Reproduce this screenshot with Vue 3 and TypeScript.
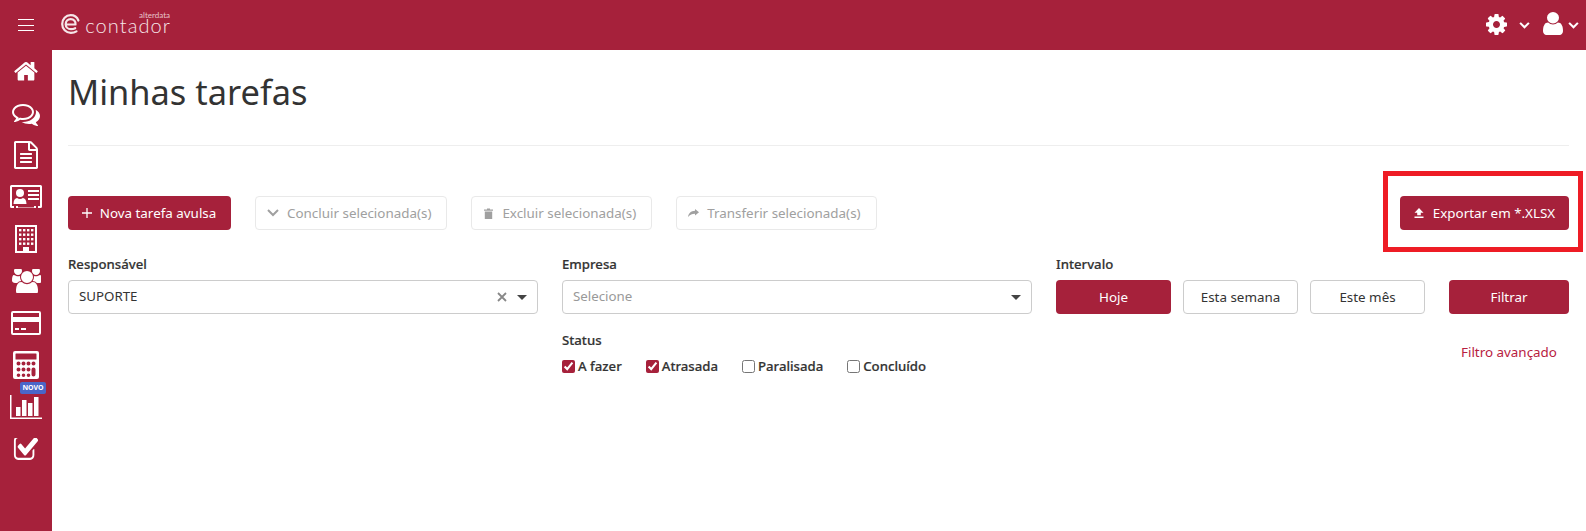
<script setup lang="ts">
const intervals: { label: string; active: boolean }[] = [
  { label: 'Hoje', active: true },
  { label: 'Esta semana', active: false },
  { label: 'Este mês', active: false },
]
const statuses: { label: string; checked: boolean }[] = [
  { label: 'A fazer', checked: true },
  { label: 'Atrasada', checked: true },
  { label: 'Paralisada', checked: false },
  { label: 'Concluído', checked: false },
]
</script>

<template>
  <div class="page">
    <header class="topbar">
      <button class="burger" aria-label="Menu"><span></span><span></span><span></span></button>
      <div class="logo">
        <svg class="logo-e" viewBox="0 0 19 20" width="19" height="20" fill="none" stroke="#f6e6e9" stroke-width="2.200" stroke-linecap="round" stroke-linejoin="round">
          <path d="M5 10.500h9.500c.4-3-1.500-5.300-4.800-5.300-3 0-5 2.100-5 5s2.200 5 5.300 5c1.500 0 2.900-.3 4.200-1" />
          <path d="M17.400 6.500C16 3 13.200 1.200 9.700 1.200 4.800 1.200 1.200 5 1.200 10s3.700 8.800 8.700 8.800c2.200 0 4-.5 5.600-1.400" />
        </svg>
        <div class="logo-text">
          <span class="logo-small">alterdata</span>
          <span class="logo-main">contador</span>
        </div>
      </div>
      <div class="top-actions">
        <svg class="gear" viewBox="128 128 1536 1536" width="21" height="21" fill="#fff"><path d="M1152 896q0-106-75-181t-181-75-181 75-75 181 75 181 181 75 181-75 75-181zm512-109v222q0 12-8 23t-20 13l-185 28q-19 54-39 91 35 50 107 138 10 12 10 25t-9 23q-27 37-99 108t-94 71q-12 0-26-9l-138-108q-44 23-91 38-16 136-29 186-7 28-36 28h-222q-14 0-24.500-8.500t-11.500-21.500l-28-184q-49-16-90-37l-141 107q-10 9-25 9-14 0-25-11-126-114-165-168-7-10-7-23 0-12 8-23 15-21 51-66.500t54-70.500q-27-50-41-99l-183-27q-13-2-21-12.500t-8-23.500v-222q0-12 8-23t19-13l186-28q14-46 39-92-40-57-107-138-10-12-10-24 0-10 9-23 26-36 98.500-107.500t94.500-71.500q13 0 26 10l138 107q44-23 91-38 16-136 29-186 7-28 36-28h222q14 0 24.500 8.500t11.500 21.500l28 184q49 16 90 37l142-107q9-9 24-9 13 0 25 10 129 119 165 170 7 8 7 22 0 12-8 23-15 21-51 66.500t-54 70.500q26 50 41 98l183 28q13 2 21 12.500t8 23.500z"/></svg>
        <svg class="chev" viewBox="0 0 12 8" width="11" height="7" fill="none" stroke="#fff" stroke-width="2.400"><path d="M1 1l5 5 5-5"/></svg>
        <svg class="user" viewBox="256 128 1280 1536" width="20" height="23" preserveAspectRatio="none" fill="#fff"><path d="M1536 1399q0 109-62.500 187t-150.500 78h-854q-88 0-150.500-78t-62.500-187q0-85 8.500-160.500t31.500-152 58.500-131 94-89 134.500-34.500q131 128 313 128t313-128q76 0 134.500 34.500t94 89 58.500 131 31.500 152 8.500 160.500zm-256-887q0 159-112.500 271.500t-271.500 112.500-271.500-112.500-112.500-271.500 112.500-271.500 271.500-112.500 271.500 112.500 112.500 271.500z"/></svg>
        <svg class="chev" viewBox="0 0 12 8" width="11" height="7" fill="none" stroke="#fff" stroke-width="2.400"><path d="M1 1l5 5 5-5"/></svg>
      </div>
    </header>

    <div class="body">
      <nav class="sidebar">
        <a class="nav-item">
          <svg viewBox="0 192 1792 1408" width="26" height="20.500" fill="#fff"><path d="M1472 992v480q0 26-19 45t-45 19h-384v-384h-256v384h-384q-26 0-45-19t-19-45v-480q0-1 .5-3t.5-3l575-474 575 474q1 2 1 6zm223-69l-62 74q-8 9-21 11h-3q-13 0-21-7l-692-577-692 577q-12 8-24 7-13-2-21-11l-62-74q-8-10-7-23.500t11-21l719-599q32-26 76-26t76 26l244 204v-195q0-14 9-23t23-9h192q14 0 23 9t9 23v408l219 182q10 8 11 21.500t-7 23.500z"/></svg>
        </a>
        <a class="nav-item nav-chat">
          <svg viewBox="0 256 1792 1408" width="28" height="22" fill="#fff"><path d="M704 384q-153 0-286 52t-211.500 141-78.500 191q0 82 53 158t149 132l97 56-35 84q34-20 62-39l44-31 53 10q78 14 153 14 153 0 286-52t211.500-141 78.500-191-78.500-191-211.500-141-286-52zm0-128q191 0 353.500 68.500t256.500 186.500 94 257-94 257-256.500 186.500-353.500 68.500q-86 0-176-16-124 88-278 128-36 9-86 16h-3q-11 0-20.500-8t-11.500-21q-1-3-1-6.500t.5-6.500 2-6l2.500-5 3.500-5.500 4-5 4.500-5 4-4.500q5-6 23-25t26-29.500 22.500-29 25-38.500 20.500-44q-124-72-195-177t-71-224q0-139 94-257t256.500-186.500 353.500-68.500zm822 1169q10 24 20.500 44t25 38.500 22.500 29 26 29.500 23 25q1 1 4 4.500t4.500 5 4 5 3.500 5.500l2.500 5 2 6 .5 6.500-1 6.500q-3 14-13 22t-22 7q-50-7-86-16-154-40-278-128-90 16-176 16-271 0-472-132 58 4 88 4 161 0 309-45t264-129q125-92 192-212t67-254q0-77-23-152 129 71 204 178t75 230q0 120-71 224.500t-195 176.500z"/></svg>
        </a>
        <a class="nav-item">
          <svg viewBox="128 0 1536 1792" width="24" height="28" fill="#fff"><path d="M1596 380q28 28 48 76t20 88v1152q0 40-28 68t-68 28h-1344q-40 0-68-28t-28-68v-1600q0-40 28-68t68-28h896q40 0 88 20t76 48zm-444-244v376h376q-10-29-22-41l-313-313q-12-12-41-22zm384 1528v-1024h-416q-40 0-68-28t-28-68v-416h-768v1536h1280zm-1024-864q0-14 9-23t23-9h704q14 0 23 9t9 23v64q0 14-9 23t-23 9h-704q-14 0-23-9t-9-23v-64zm736 224q14 0 23 9t9 23v64q0 14-9 23t-23 9h-704q-14 0-23-9t-9-23v-64q0-14 9-23t23-9h704zm0 256q14 0 23 9t9 23v64q0 14-9 23t-23 9h-704q-14 0-23-9t-9-23v-64q0-14 9-23t23-9h704z"/></svg>
        </a>
        <a class="nav-item">
          <svg viewBox="0 0 32 24" width="32" height="24" fill="#fff">
            <path fill-rule="evenodd" d="M1.500 0h29A1.500 1.500 0 0 1 32 1.500v20a1.500 1.500 0 0 1-1.500 1.500H28v-2h2V2H2v19h2v2H1.500A1.500 1.500 0 0 1 0 21.500v-20A1.500 1.500 0 0 1 1.500 0z"/>
            <path d="M6 21h2v1.500H24V21h2v2H6z"/>
            <circle cx="10" cy="8" r="4"/>
            <path d="M3.500 19c0-4 1.700-6 3.600-6 .8.700 1.800 1 2.900 1s2.100-.3 2.900-1c1.900 0 3.600 2 3.600 6z"/>
            <rect x="18" y="5" width="11" height="2"/><rect x="18" y="9" width="11" height="2"/><rect x="18" y="13" width="11" height="2"/>
          </svg>
        </a>
        <a class="nav-item">
          <svg viewBox="0 0 22 28" width="22" height="28" fill="#fff">
            <path fill-rule="evenodd" d="M0 0h22v28H0zM2 2v24h6v-4h6v4h6V2z"/>
            <g>
              <rect x="4" y="4" width="2.400" height="2.400"/><rect x="8" y="4" width="2.400" height="2.400"/><rect x="12" y="4" width="2.400" height="2.400"/><rect x="16" y="4" width="2.400" height="2.400"/>
              <rect x="4" y="8.500" width="2.400" height="2.400"/><rect x="8" y="8.500" width="2.400" height="2.400"/><rect x="12" y="8.500" width="2.400" height="2.400"/><rect x="16" y="8.500" width="2.400" height="2.400"/>
              <rect x="4" y="13" width="2.400" height="2.400"/><rect x="8" y="13" width="2.400" height="2.400"/><rect x="12" y="13" width="2.400" height="2.400"/><rect x="16" y="13" width="2.400" height="2.400"/>
              <rect x="4" y="17.500" width="2.400" height="2.400"/><rect x="8" y="17.500" width="2.400" height="2.400"/><rect x="12" y="17.500" width="2.400" height="2.400"/><rect x="16" y="17.500" width="2.400" height="2.400"/>
            </g>
            <rect x="8" y="22" width="6" height="6"/>
          </svg>
        </a>
        <a class="nav-item">
          <svg viewBox="0 128 1920 1536" width="30" height="24" fill="#fff"><path d="M657 896q-162 5-265 128h-134q-82 0-138-40.500t-56-118.500q0-353 124-353 6 0 43.500 21t97.500 42.500 119 21.500q67 0 133-23-5 37-5 66 0 139 81 256zm1071 637q0 120-73 189.500t-194 69.500h-874q-121 0-194-69.500t-73-189.500q0-53 3.500-103.500t14-109 26.500-108.500 43-97.500 62-81 85.500-53.500 111.500-20q10 0 43 21.500t73 48 107 48 135 21.500 135-21.500 107-48 73-48 43-21.500q61 0 111.500 20t85.500 53.500 62 81 43 97.500 26.500 108.500 14 109 3.500 103.500zm-1024-1277q0 106-75 181t-181 75-181-75-75-181 75-181 181-75 181 75 75 181zm704 384q0 159-112.500 271.500t-271.500 112.500-271.500-112.500-112.500-271.500 112.500-271.500 271.500-112.500 271.500 112.500 112.500 271.500zm576 225q0 78-56 118.500t-138 40.500h-134q-103-123-265-128 81-117 81-256 0-29-5-66 66 23 133 23 59 0 119-21.500t97.500-42.500 43.500-21q124 0 124 353zm-128-609q0 106-75 181t-181 75-181-75-75-181 75-181 181-75 181 75 75 181z"/></svg>
        </a>
        <a class="nav-item">
          <svg viewBox="0 0 30 24" width="30" height="24" fill="#fff">
            <path fill-rule="evenodd" d="M2 0h26a2 2 0 0 1 2 2v20a2 2 0 0 1-2 2H2a2 2 0 0 1-2-2V2a2 2 0 0 1 2-2zm0 2v4h26V2zm0 9v11h26V11z"/>
            <rect x="4" y="17" width="4" height="2"/><rect x="10" y="17" width="5" height="2"/>
          </svg>
        </a>
        <a class="nav-item">
          <svg viewBox="0 0 26 28" width="26" height="28" fill="#fff">
            <path fill-rule="evenodd" d="M2 0h22a2 2 0 0 1 2 2v24a2 2 0 0 1-2 2H2a2 2 0 0 1-2-2V2a2 2 0 0 1 2-2zm1 2.500a.5.5 0 0 0-.5.500v5a.5.5 0 0 0 .5.500h20a.5.500 0 0 0 .5-.500V3a.5.5 0 0 0-.5-.500zM5.500 10.500a2 2 0 1 0 0 4 2 2 0 0 0 0-4zm5 0a2 2 0 1 0 0 4 2 2 0 0 0 0-4zm5 0a2 2 0 1 0 0 4 2 2 0 0 0 0-4zm5 0a2 2 0 1 0 0 4 2 2 0 0 0 0-4zm-15 6a2 2 0 1 0 0 4 2 2 0 0 0 0-4zm5 0a2 2 0 1 0 0 4 2 2 0 0 0 0-4zm5 0a2 2 0 1 0 0 4 2 2 0 0 0 0-4zm5 0a2 2 0 0 0-2 2v5a2 2 0 1 0 4 0v-5a2 2 0 0 0-2-2zm-15 6a1.800 1.800 0 1 0 0 3.600 1.800 1.800 0 0 0 0-3.600zm5 0a1.800 1.800 0 1 0 0 3.600 1.800 1.800 0 0 0 0-3.600zm5 0a1.800 1.800 0 1 0 0 3.600 1.800 1.800 0 0 0 0-3.600z"/>
          </svg>
        </a>
        <a class="nav-item nav-chart">
          <span class="novo">NOVO</span>
          <svg viewBox="0 0 32 24" width="32" height="24" fill="#fff">
            <path d="M0 0h1.500v22.500H32V24H0z"/>
            <rect x="6" y="12" width="4.500" height="9"/><rect x="12" y="5" width="4.500" height="16"/><rect x="18" y="8" width="4.500" height="13"/><rect x="24" y="2" width="4.500" height="19"/>
          </svg>
        </a>
        <a class="nav-item">
          <svg viewBox="0 256 1792 1280" width="26" height="22" preserveAspectRatio="none" fill="#fff"><path d="M1472 930v318q0 119-84.500 203.500t-203.500 84.500h-832q-119 0-203.500-84.500t-84.500-203.500v-832q0-119 84.500-203.500t203.500-84.500h832q63 0 117 25 15 7 18 23 3 17-9 29l-49 49q-10 10-23 10-3 0-9-2-23-6-45-6h-832q-66 0-113 47t-47 113v832q0 66 47 113t113 47h832q66 0 113-47t47-113v-254q0-13 9-22l64-64q10-10 23-10 6 0 12 3 20 8 20 29zm231-489l-814 814q-24 24-57 24t-57-24l-430-430q-24-24-24-57t24-57l110-110q24-24 57-24t57 24l263 263 647-647q24-24 57-24t57 24l110 110q24 24 24 57t-24 57z"/></svg>
        </a>
      </nav>

      <main class="content">
        <h1 class="title">Minhas tarefas</h1>
        <hr class="rule" />

        <div class="toolbar">
          <button class="btn primary nova">
            <svg viewBox="0 0 10 10" width="10" height="10" stroke="#fff" stroke-width="1.300"><path d="M5 0v10M0 5h10"/></svg>
            Nova tarefa avulsa
          </button>
          <button class="btn ghost">
            <svg viewBox="0 0 12 8" width="12" height="8" fill="none" stroke="#a0a0a0" stroke-width="2"><path d="M1 1l5 5 5-5"/></svg>
            Concluir selecionada(s)
          </button>
          <button class="btn ghost">
            <svg viewBox="0 0 9 11" width="11" height="11" fill="#a0a0a0"><path d="M0 1.500h3V.500h3v1h3v1.200H0zM.8 3.500h7.400V11H.8z"/></svg>
            Excluir selecionada(s)
          </button>
          <button class="btn ghost">
            <svg viewBox="0 0 11 8" width="11" height="8" fill="#a0a0a0"><path d="M7 0l4 3.300L7 6.600V4.700C4 4.700 2 5.500 0 8c.5-3.700 3-6 7-6.200z"/></svg>
            Transferir selecionada(s)
          </button>
          <button class="btn primary export">
            <svg viewBox="0 0 10 10" width="10" height="10" fill="#fff"><path d="M5 0l4.500 4.800H6.800v2.400H3.200V4.800H.5zM.5 8.500h9V10h-9z"/></svg>
            Exportar em *.XLSX
          </button>
          <span class="annotation" aria-hidden="true"></span>
        </div>

        <div class="filters">
          <div class="field">
            <label class="label">Responsável</label>
            <div class="select">
              <span class="value">SUPORTE</span>
              <svg class="clear" viewBox="0 0 10 10" width="10" height="10" stroke="#888" stroke-width="1.800"><path d="M1 1l8 8M9 1l-8 8"/></svg>
              <span class="caret"></span>
            </div>
          </div>

          <div class="field">
            <label class="label">Empresa</label>
            <div class="select">
              <span class="value placeholder">Selecione</span>
              <span class="caret"></span>
            </div>
            <label class="label status-label">Status</label>
            <div class="checks">
              <label v-for="s in statuses" :key="s.label" class="check">
                <input type="checkbox" :checked="s.checked" />{{ s.label }}
              </label>
            </div>
          </div>

          <div class="field">
            <label class="label">Intervalo</label>
            <div class="range">
              <button
                v-for="i in intervals"
                :key="i.label"
                class="btn range-btn"
                :class="i.active ? 'primary' : 'outline'"
              >{{ i.label }}</button>
              <button class="btn primary filter-btn">Filtrar</button>
            </div>
            <a class="advanced">Filtro avançado</a>
          </div>
        </div>
      </main>
    </div>
  </div>
</template>

<style scoped>
.page {
  height: 531px;
  display: flex;
  flex-direction: column;
  overflow: hidden;
  font-family: "Noto Sans", "Open Sans", sans-serif;
  font-size: 13.400px;
  color: #333;
  background: #fff;
}
.topbar {
  height: 50px;
  flex: none;
  background: #a6213b;
  display: flex;
  align-items: center;
  padding: 0 7px 0 18px;
}
.burger {
  width: 16px;
  height: 12px;
  padding: 0;
  border: 0;
  background: none;
  display: flex;
  flex-direction: column;
  justify-content: space-between;
}
.burger span {
  display: block;
  height: 1px;
  background: #fff;
}
.logo {
  margin-left: 27px;
  margin-top: -3px;
  height: 21px;
  display: flex;
  align-items: flex-start;
  color: #f6e6e9;
}
.logo-e {
  flex: none;
  margin-top: 1px;
}
.logo-text {
  margin-left: 5px;
  width: 85px;
  display: flex;
  flex-direction: column;
  align-items: flex-end;
}
.logo-small {
  font-family: "Lato", sans-serif;
  font-size: 8px;
  height: 6px;
  line-height: 6px;
  margin-top: -1px;
  color: #e8c5cc;
}
.logo-main {
  font-family: "Lato", sans-serif;
  font-weight: 300;
  font-size: 20px;
  letter-spacing: 1.100px;
  line-height: 15px;
  margin-right: -1px;
}
.top-actions {
  margin-left: auto;
  display: flex;
  align-items: center;
}
.top-actions .gear {
  margin-top: -1px;
  margin-right: 1px;
}
.top-actions .chev {
  margin-left: 11px;
  margin-top: 1px;
}
.top-actions .user {
  margin-left: 13px;
  margin-top: -3px;
}
.top-actions .user + .chev {
  margin-left: 5px;
}
.body {
  flex: 1;
  display: flex;
  min-height: 0;
}
.sidebar {
  width: 52px;
  flex: none;
  background: #a6213b;
  display: flex;
  flex-direction: column;
}
.nav-item {
  position: relative;
  height: 42px;
  display: flex;
  align-items: center;
  justify-content: center;
}
.nav-chat svg {
  margin-top: 3px;
}
.novo {
  position: absolute;
  left: 20px;
  top: -4px;
  width: 26px;
  height: 12px;
  border-radius: 2px;
  background: #4a66c8;
  color: #fff;
  font-size: 7px;
  font-weight: 700;
  line-height: 12px;
  text-align: center;
}
.content {
  flex: 1;
  min-width: 0;
  padding: 0 17px 0 16px;
}
.title {
  margin: 0;
  padding-top: 19px;
  font-size: 34.400px;
  font-weight: 400;
  line-height: 46px;
  color: #333;
}
.rule {
  margin: 30px 0 0;
  border: 0;
  border-top: 1px solid #eee;
}
.toolbar {
  position: relative;
  margin-top: 50px;
  display: flex;
  gap: 24px;
}
.btn {
  height: 34px;
  box-sizing: border-box;
  font: inherit;
  border-radius: 4px;
  border: 1px solid transparent;
  display: inline-flex;
  align-items: center;
  justify-content: center;
  white-space: nowrap;
  padding: 0;
}
.btn.primary {
  background: #a6213b;
  color: #fff;
}
.btn.outline {
  background: #fff;
  border-color: #ccc;
  color: #333;
}
.btn.ghost {
  background: #fff;
  border-color: #e9e9e9;
  color: #a0a0a0;
  padding: 0 15px 0 11px;
  gap: 8px;
}
.nova {
  width: 163px;
  gap: 8px;
  padding-right: 1px;
}
.export {
  margin-left: auto;
  width: 169px;
  gap: 9px;
}
.annotation {
  position: absolute;
  right: -14px;
  top: -25px;
  width: 200px;
  height: 81px;
  box-sizing: border-box;
  border: 5px solid #ee1c25;
  pointer-events: none;
}
.filters {
  margin-top: 17px;
  display: grid;
  grid-template-columns: 470px 470px 1fr;
  gap: 24px;
}
.label {
  display: block;
  font-size: 13.200px;
  font-weight: 500;
  line-height: 20px;
  height: 20px;
  margin-top: 7px;
  color: #333;
  -webkit-text-stroke: 0.2px #333;
}
.select {
  margin-top: 6px;
  height: 34px;
  box-sizing: border-box;
  border: 1px solid #ccc;
  border-radius: 4px;
  display: flex;
  align-items: center;
  padding: 0 10px;
  font-size: 13.300px;
}
.value {
  flex: 1;
  margin-top: -2px;
}
.placeholder {
  color: #999;
}
.clear {
  margin-right: 10px;
}
.caret {
  width: 0;
  height: 0;
  border-left: 5px solid transparent;
  border-right: 5px solid transparent;
  border-top: 5px solid #444;
}
.status-label {
  margin-top: 16px;
}
.checks {
  margin-top: 6px;
  display: flex;
  gap: 24px;
}
.check {
  display: inline-flex;
  align-items: center;
  gap: 3px;
  font-size: 13.200px;
  line-height: 20px;
  font-weight: 500;
  -webkit-text-stroke: 0.2px #333;
}
.check input {
  margin: 0;
  width: 13px;
  height: 13px;
  accent-color: #a6213b;
}
.range {
  margin-top: 6px;
  display: flex;
  gap: 12px;
}
.range-btn {
  width: 115px;
}
.filter-btn {
  width: 120px;
  margin-left: 12px;
}
.advanced {
  display: block;
  margin-top: 28px;
  margin-left: 405px;
  color: #b8213f;
  line-height: 20px;
}
</style>
